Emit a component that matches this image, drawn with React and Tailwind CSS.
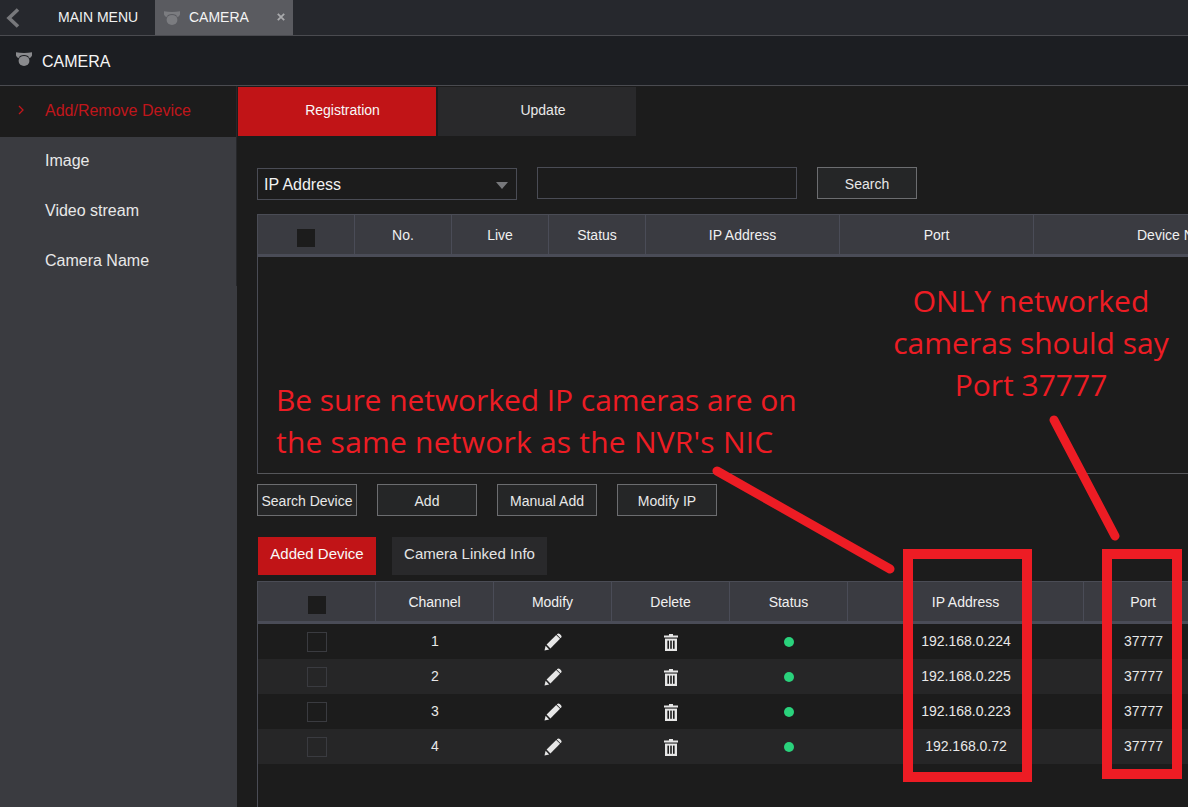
import React from "react";

function Dome({ className, color = "#8a8b8e" }) {
  return (
    <svg viewBox="0 0 16 14" className={className}>
      <path d="M0 0.2 Q8 1.6 16 0.2 L16 3.4 Q15.4 5 13.6 6.2 Q12.2 3 8 3 Q3.8 3 2.4 6.2 Q0.6 5 0 3.4 Z" fill={color} />
      <ellipse cx="8" cy="8.9" rx="5.4" ry="5" fill={color} />
    </svg>
  );
}

function Pencil() {
  return (
    <svg viewBox="0 0 18 18" className="w-[18px] h-[18px] mt-px">
      <path d="M0.5 17.5 L1.6 12.8 L5.2 16.4 Z" fill="#e6e6e6" />
      <path d="M2.6 11.6 L12.2 2 L16 5.8 L6.4 15.4 Z" fill="#e6e6e6" />
      <path d="M13.2 1 C14 0.2 15 0.2 15.8 1 L17 2.2 C17.8 3 17.8 4 17 4.8 L16.6 5.2 L12.8 1.4 Z" fill="#e6e6e6" />
    </svg>
  );
}

function Trash() {
  return (
    <svg viewBox="0 0 14 17" className="w-[14px] h-[17px] mt-px">
      <path d="M5 0 H9 V1.6 H14 V3.4 H0 V1.6 H5 Z" fill="#e6e6e6" />
      <path d="M1 4.6 H13 V17 H1 Z" fill="#e6e6e6" />
      <rect x="3.4" y="6.6" width="1.6" height="8.2" fill="#1c1c1c" />
      <rect x="6.2" y="6.6" width="1.6" height="8.2" fill="#1c1c1c" />
      <rect x="9" y="6.6" width="1.6" height="8.2" fill="#1c1c1c" />
    </svg>
  );
}

function ActionBtn({ children }) {
  return (
    <button className="w-[100px] h-[32px] pt-[2px] border border-[#6c6d70] bg-[#252627] text-[14px] text-[#e8e8e8] flex items-center justify-center whitespace-nowrap">
      {children}
    </button>
  );
}

const topCols = [
  ["w-[97px]", ""],
  ["w-[97px]", "No."],
  ["w-[97px]", "Live"],
  ["w-[97px]", "Status"],
  ["w-[194px]", "IP Address"],
  ["w-[194px]", "Port"],
  ["w-[291px]", "Device Name"],
];

const bottomCols = [
  ["w-[118px]", ""],
  ["w-[118px]", "Channel"],
  ["w-[118px]", "Modify"],
  ["w-[118px]", "Delete"],
  ["w-[118px]", "Status"],
  ["w-[236px]", "IP Address"],
  ["w-[119px]", "Port"],
];

const rows = [
  ["1", "192.168.0.224", "37777"],
  ["2", "192.168.0.225", "37777"],
  ["3", "192.168.0.223", "37777"],
  ["4", "192.168.0.72", "37777"],
];

function HeadRow({ cols }) {
  return (
    <div className="flex h-[42px] shrink-0 w-max bg-[#3a3b41] border-b-[3px] border-[#4a4c57]">
      {cols.map(([w, label], i) => (
        <div
          key={i}
          className={`${w} h-[39px] pt-[2px] shrink-0 flex items-center justify-center text-[14px] text-[#f0f0f0] whitespace-nowrap border-r border-[#4a4c57]`}
        >
          {i === 0 ? <span className="w-[18px] h-[18px] mt-[4px] bg-[#1c1c1c]" /> : label}
        </div>
      ))}
    </div>
  );
}

export default function App() {
  return (
    <div className="relative w-[1188px] h-[807px] overflow-hidden bg-[#1c1c1c] flex flex-col text-white [font-family:'Liberation_Sans',Arial,sans-serif]">
      {/* top tab bar */}
      <div className="h-[36px] shrink-0 flex bg-[#26282d] border-b border-[#4a4b50]">
        <div className="w-[58px] flex items-center pl-[6px]">
          <svg viewBox="0 0 14 20" className="w-[14px] h-[20px]">
            <path d="M12 1.5 L3 10 L12 18.5" fill="none" stroke="#77787b" strokeWidth="3.6" />
          </svg>
        </div>
        <div className="w-[97px] flex items-center text-[14px] text-[#f2f2f2]">MAIN MENU</div>
        <div className="w-[138px] bg-[#5a5b60] flex items-center text-[14px] text-[#f4f4f4] relative pl-[9px]">
          <Dome className="w-[16px] h-[14px] mr-[9px]" color="#7b7c80" />
          CAMERA
          <svg viewBox="0 0 8 8" className="absolute right-[8px] top-[13px] w-[8px] h-[8px]">
            <path d="M0.8 0.8 L7.2 7.2 M7.2 0.8 L0.8 7.2" fill="none" stroke="#a9aaac" strokeWidth="1.8" />
          </svg>
        </div>
      </div>

      {/* section title */}
      <div className="h-[50px] shrink-0 flex items-center pl-[16px] pt-[2px] bg-[#1c1e22] border-b border-[#4a4b50] text-[16px] text-[#f5f5f5]">
        <Dome className="w-[16px] h-[14px] mr-[10px] -mt-[5px]" color="#8a8b8e" />
        CAMERA
      </div>

      <div className="flex flex-1 min-h-0">
        {/* sidebar */}
        <div className="w-[237px] shrink-0 bg-[#3a3b40] flex flex-col">
          <div className="w-[237px] border-r border-[#26272a] h-[200px] text-[16px] text-[#e8e8e8]">
            <div className="h-[51px] bg-[#1c1c1c] text-[#c0161b] flex items-center pb-px pl-[45px] relative">
              <svg viewBox="0 0 6 10" className="absolute left-[18px] top-[19px] w-[6px] h-[10px]">
                <path d="M1 1 L5 5 L1 9" fill="none" stroke="#c0161b" strokeWidth="1.3" />
              </svg>
              Add/Remove Device
            </div>
            <div className="h-[49px] pb-[2px] flex items-center pl-[45px]">Image</div>
            <div className="h-[50px] flex items-center pl-[45px]">Video stream</div>
            <div className="h-[50px] flex items-center pl-[45px]">Camera Name</div>
          </div>
        </div>

        {/* main */}
        <div className="flex-1 min-w-0 flex flex-col">
          <div className="flex pt-px pl-px gap-[2px] h-[50px] shrink-0 text-[14px]">
            <div className="w-[198px] pl-[11px] pb-[2px] bg-[#c11417] flex items-center justify-center text-[#f8f8f8]">Registration</div>
            <div className="w-[198px] pl-[12px] pb-[2px] bg-[#29292b] flex items-center justify-center text-[#e8e8e8]">Update</div>
          </div>

          <div className="pl-[20px] flex flex-col flex-1 min-h-0">
            <div className="flex gap-[20px] mt-[31px] h-[33px] shrink-0">
              <div className="w-[260px] h-[32px] mt-px pt-[2px] border border-[#4a4c55] flex items-center justify-between pl-[6px] pr-[8px] text-[16px] text-[#f2f2f2]">
                IP Address
                <span className="w-0 h-0 border-l-[6px] border-r-[6px] border-t-[7px] border-l-transparent border-r-transparent border-t-[#77787b]" />
              </div>
              <div className="w-[260px] h-[32px] border border-[#4a4c55]" />
              <ActionBtn>Search</ActionBtn>
            </div>

            <div className="mt-[14px] h-[260px] shrink-0 w-[1100px] border border-[#4a4c55] border-b-[#55565a]">
              <HeadRow cols={topCols} />
            </div>

            <div className="flex gap-[20px] mt-[10px] shrink-0">
              <ActionBtn>Search Device</ActionBtn>
              <ActionBtn>Add</ActionBtn>
              <ActionBtn>Manual Add</ActionBtn>
              <ActionBtn>Modify IP</ActionBtn>
            </div>

            <div className="flex gap-[16px] mt-[21px] ml-px shrink-0 h-[38px] text-[15px]">
              <div className="w-[118px] pb-[4px] bg-[#c11417] flex items-center justify-center text-[#f8f8f8]">Added Device</div>
              <div className="w-[155px] pb-[4px] bg-[#29292b] flex items-center justify-center text-[#e4e4e4]">Camera Linked Info</div>
            </div>

            <div className="mt-[6px] flex-1 w-[1100px] border-l border-t border-[#4a4c55] flex flex-col">
              <HeadRow cols={bottomCols} />
              {rows.map(([ch, ip, port], i) => (
                <div key={ch} className={`flex h-[35px] shrink-0 items-center text-[14px] text-[#e8e8e8] ${i % 2 ? "bg-[#262627]" : "bg-[#1c1c1c]"}`}>
                  <div className="w-[118px] flex justify-center">
                    <span className="w-[20px] h-[20px] border border-[#3a3b40]" />
                  </div>
                  <div className="w-[118px] text-center">{ch}</div>
                  <div className="w-[118px] flex justify-center"><Pencil /></div>
                  <div className="w-[118px] flex justify-center"><Trash /></div>
                  <div className="w-[118px] flex justify-center">
                    <span className="w-[10px] h-[10px] rounded-full bg-[#2ad27c]" />
                  </div>
                  <div className="w-[236px] text-center">{ip}</div>
                  <div className="w-[119px] text-center">{port}</div>
                </div>
              ))}
            </div>
          </div>
        </div>
      </div>

      {/* red annotations laid over the screenshot */}
      <svg className="absolute left-0 top-0 w-[1188px] h-[807px] pointer-events-none" viewBox="0 0 1188 807">
        <g fill="none" stroke="#ed1c24">
          <path d="M717 471 L890 569" strokeWidth="9" strokeLinecap="round" />
          <path d="M1054 420 L1115 536" strokeWidth="9" strokeLinecap="round" />
          <rect x="908" y="554" width="119" height="223" strokeWidth="10" />
          <rect x="1107" y="554" width="70" height="220" strokeWidth="10" />
        </g>
      </svg>
      <div className="absolute left-[276px] top-[379px] text-[30px] leading-[42px] text-[#ed1c24] whitespace-nowrap [font-family:'Open_Sans',sans-serif]">
        <div className="tracking-[-0.06px]">Be sure networked IP cameras are on</div>
        <div className="tracking-[0.22px]">the same network as the NVR's NIC</div>
      </div>
      <div className="absolute left-[874px] top-[280px] w-[314px] text-center text-[30px] leading-[42px] text-[#ed1c24] whitespace-nowrap [font-family:'Open_Sans',sans-serif]">
        <div>ONLY networked</div>
        <div>cameras should say</div>
        <div>Port 37777</div>
      </div>
    </div>
  );
}
